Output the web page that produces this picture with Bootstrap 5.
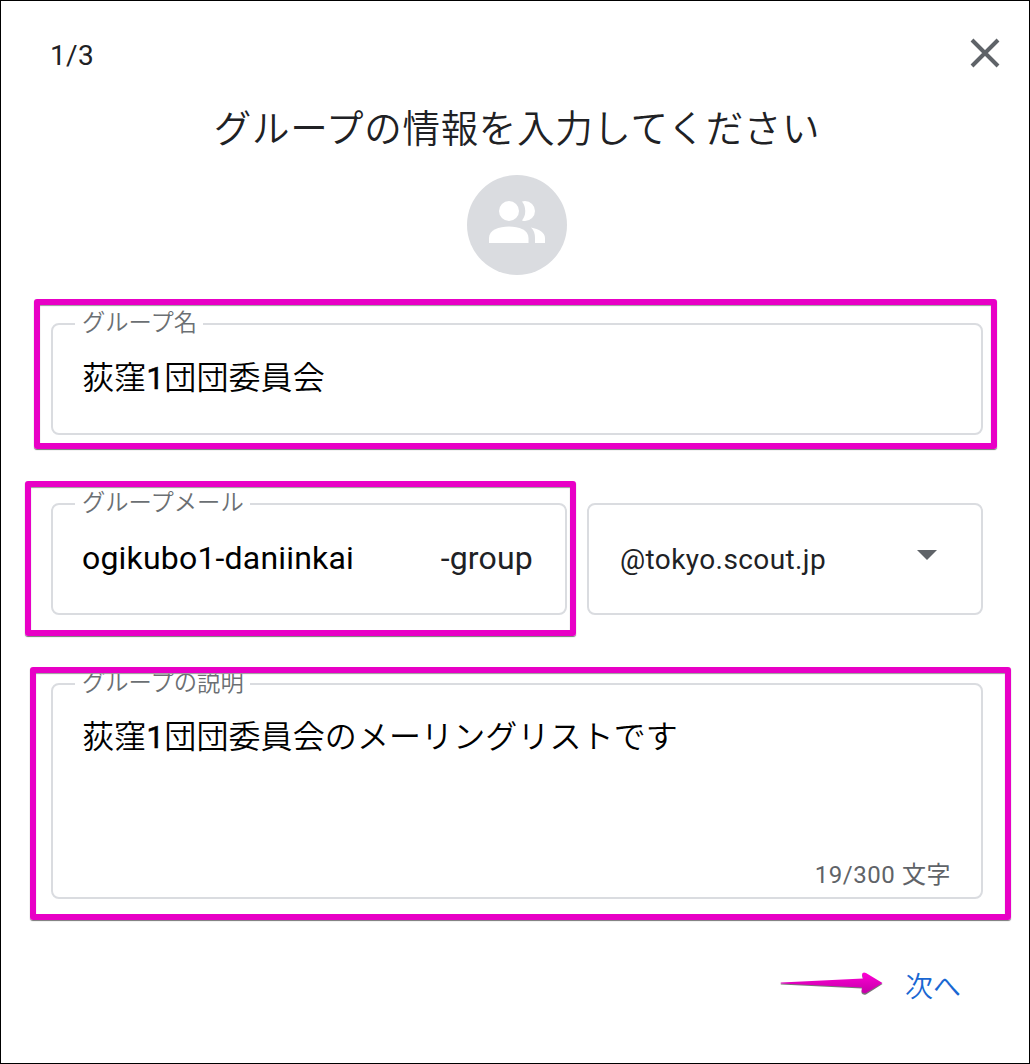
<!DOCTYPE html>
<html lang="ja">
<head>
<meta charset="utf-8">
<meta name="viewport" content="width=device-width, initial-scale=1">
<title>グループの作成</title>
<link href="https://cdn.jsdelivr.net/npm/bootstrap@5.3.0/dist/css/bootstrap.min.css" rel="stylesheet">
<style>
  body { font-family: Roboto, "Noto Sans CJK JP", sans-serif; color: #202124; }
  .dialog-box { width: 1030px; height: 1064px; border: 1px solid #000; padding: 0 46px 0 50px; }
  .dialog-top { height: 104px; margin-right: -17px; }
  .step-count { font-size: 28px; letter-spacing: .3px; line-height: 32px; padding-top: 6px; margin-left: -1px; }
  .close-btn { width: 30px; height: 30px; }
  .dialog-title { font-size: 37.5px; letter-spacing: .68px; line-height: 48px; font-weight: 350; margin: 0 0 22px; height: 48px; white-space: nowrap; }
  .avatar-disc { width: 100px; height: 100px; background: #dadce0; margin-bottom: 48px; }
  .outlined { border: 2px solid #dadce0; border-radius: 8px; height: 112px; padding: 0 32px 0 29px; }
  .outlined + .outlined { margin-left: 20px; }
  .float-label { left: 22px; top: -19px; padding: 0 6px 0 7px; font-size: 23.3px; line-height: 34px; font-weight: 350; color: #6b6f73; white-space: nowrap; }
  .field-value { font-size: 32px; line-height: 40px; color: #000; white-space: nowrap; padding-bottom: 2px; }
  .value-ja { font-weight: 350; letter-spacing: .1px; }
  .value-ja .digit { font-weight: 400; -webkit-text-stroke: .4px #000; }
  .value-mail { letter-spacing: .19px; }
  .mail-row { margin: 68px 0; }
  .mail-field { width: 516px; }
  .domain-field { width: 396px; padding-left: 31px; padding-right: 44px; }
  .domain-name { font-size: 28px; letter-spacing: .4px; padding-top: 1px; }
  .desc-field { height: 216px; padding-top: 32px; }
  .char-count { font-size: 24px; letter-spacing: .55px; line-height: 32px; color: #5f6368; margin-bottom: 6px; margin-right: -2px; }
  .next-row { padding: 69px 22px 0 0; }
  .next-btn { font-size: 28px; line-height: 40px; color: #1967d2; font-weight: 350; }
  .callout { border: 6px solid #e800c6; border-radius: 3px; box-shadow: 0 1px 1px #777, inset 0 1px 1px #999; pointer-events: none; }
  .callout-name { left: 34px; top: 299px; width: 963px; height: 150px; }
  .callout-mail { left: 25px; top: 481px; width: 551px; height: 155px; }
  .callout-desc { left: 30px; top: 667px; width: 981px; height: 253px; }
  .callout-arrow { left: 778px; top: 969px; }
</style>
<script src="https://cdn.jsdelivr.net/npm/bootstrap@5.3.0/dist/js/bootstrap.bundle.min.js"></script>
</head>
<body class="bg-white">
<main class="dialog-box position-relative overflow-hidden">
  <header class="dialog-top d-flex justify-content-between align-items-center">
    <span class="step-count">1/3</span>
    <svg class="close-btn" viewBox="0 0 30 30" role="img" aria-label="閉じる"><path d="M2 2 28 28M28 2 2 28" stroke="#5f6368" stroke-width="4" fill="none"/></svg>
  </header>
  <h1 class="dialog-title text-center">グループの情報を入力してください</h1>
  <div class="avatar-disc rounded-circle mx-auto">
    <svg width="100" height="100" viewBox="0 0 100 100" fill="#fff" aria-hidden="true">
      <circle cx="42" cy="36" r="10"/>
      <path d="M58 26a10 10 0 0 1 0 20q-1.500 0-3-.5a15.500 15.500 0 0 0 0-19q1.500-.5 3-.5Z"/>
      <path d="M22 68v-5c0-8 10-11.500 20-11.500S61.500 55 61.500 63v5Z"/>
      <path d="M68 68v-5c0-4.500-1-7.500-4-10.500 8 1.500 14 5 14 10.500v5Z"/>
    </svg>
  </div>
  <form>
    <div class="outlined position-relative d-flex align-items-center">
      <label class="float-label position-absolute bg-white">グループ名</label>
      <span class="field-value value-ja">荻窪<span class="digit">1</span>団団委員会</span>
    </div>
    <div class="mail-row d-flex">
      <div class="outlined mail-field position-relative d-flex align-items-center justify-content-between">
        <label class="float-label position-absolute bg-white">グループメール</label>
        <span class="field-value value-mail">ogikubo1-daniinkai</span>
        <span class="field-value value-mail text-reset">-group</span>
      </div>
      <div class="outlined domain-field d-flex align-items-center justify-content-between">
        <span class="domain-name">@tokyo.scout.jp</span>
        <svg width="20" height="10" viewBox="0 0 20 10" class="mb-2" aria-hidden="true"><path d="M0 0h20L10 10Z" fill="#5f6368"/></svg>
      </div>
    </div>
    <div class="outlined desc-field position-relative d-flex flex-column justify-content-between">
      <label class="float-label position-absolute bg-white">グループの説明</label>
      <span class="field-value value-ja">荻窪<span class="digit">1</span>団団委員会のメーリングリストです</span>
      <span class="char-count align-self-end">19/300 文字</span>
    </div>
    <div class="next-row d-flex justify-content-end">
      <button type="button" class="next-btn btn p-0 border-0">次へ</button>
    </div>
  </form>
</main>
<div class="callout callout-name position-absolute"></div>
<div class="callout callout-mail position-absolute"></div>
<div class="callout callout-desc position-absolute"></div>
<svg class="callout-arrow position-absolute" width="108" height="28" viewBox="0 0 108 28" aria-hidden="true">
  <defs><linearGradient id="pink" x2="0" y2="1"><stop offset="0" stop-color="#ff00d5"/><stop offset="1" stop-color="#c400a8"/></linearGradient></defs>
  <path d="M3 14.500 84 18.500 83.500 23Q85 25.500 88 24.500L104.500 14 88 4.500Q85 3 84 5.500L85 9.500 3 13.500Q2 14 3 14.500Z" fill="#777" transform="translate(0 1)"/>
  <path d="M3 14.500 84 18.500 83.500 22.500Q85 25 88 24L104.500 14 88 4Q85 2.500 84 5L85 9.500 3 13.500Q2 14 3 14.500Z" fill="url(#pink)"/>
</svg>
</body>
</html>
